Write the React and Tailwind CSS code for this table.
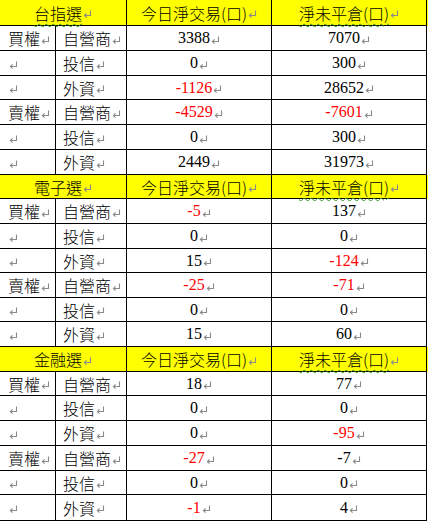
import React from "react";

const Mark = () => (
  <svg width="9" height="9" viewBox="0 0 9 9" className="inline-block ml-[1px] translate-y-[2px]" aria-hidden="true">
    <path d="M7.5 0.5 V5.5 H1.5" fill="none" stroke="#8a8a8a" strokeWidth="1.1" />
    <path d="M3.6 3.4 L1.4 5.5 L3.6 7.6" fill="none" stroke="#8a8a8a" strokeWidth="1.1" />
  </svg>
);

const sections = [
  {
    title: "台指選",
    titleUnderline: true,
    heights: [26, 25, 25, 24, 25, 25, 25],
    rows: [
      ["買權", "自營商", ["3388", 0], ["7070", 0]],
      ["", "投信", ["0", 0], ["300", 0]],
      ["", "外資", ["-1126", 1], ["28652", 0]],
      ["賣權", "自營商", ["-4529", 1], ["-7601", 1]],
      ["", "投信", ["0", 0], ["300", 0]],
      ["", "外資", ["2449", 0], ["31973", 0]],
    ],
  },
  {
    title: "電子選",
    titleUnderline: false,
    heights: [24, 25, 25, 24, 25, 24, 25],
    rows: [
      ["買權", "自營商", ["-5", 1], ["137", 0]],
      ["", "投信", ["0", 0], ["0", 0]],
      ["", "外資", ["15", 0], ["-124", 1]],
      ["賣權", "自營商", ["-25", 1], ["-71", 1]],
      ["", "投信", ["0", 0], ["0", 0]],
      ["", "外資", ["15", 0], ["60", 0]],
    ],
  },
  {
    title: "金融選",
    titleUnderline: false,
    heights: [25, 24, 25, 25, 25, 24, 26],
    rows: [
      ["買權", "自營商", ["18", 0], ["77", 0]],
      ["", "投信", ["0", 0], ["0", 0]],
      ["", "外資", ["0", 0], ["-95", 1]],
      ["賣權", "自營商", ["-27", 1], ["-7", 0]],
      ["", "投信", ["0", 0], ["0", 0]],
      ["", "外資", ["-1", 1], ["4", 0]],
    ],
  },
];

const cjk = "font-['Noto_Sans_CJK_TC','Noto_Sans_CJK_JP',sans-serif] font-light";
const num = "font-['Liberation_Serif','Noto_Sans_CJK_TC',serif]";
const wavy = "underline decoration-wavy decoration-[#3c9a2c] decoration-1 underline-offset-[3px]";

function Section({ s }) {
  return (
    <>
      <div className="flex bg-[#ffff00] text-black" style={{ height: s.heights[0] }}>
        <div className={`w-[127px] border-r border-b border-black flex items-center justify-center ${cjk} text-[16px] leading-none`}>
          <span className={s.titleUnderline ? wavy : ""}>{s.title}</span>
          <Mark />
        </div>
        <div className={`w-[145px] border-r border-b border-black flex items-center justify-center ${cjk} text-[16px] leading-none`}>
          <span>今日淨交易(口)</span>
          <Mark />
        </div>
        <div className={`w-[155px] border-r border-b border-black flex items-center justify-center ${cjk} text-[16px] leading-none`}>
          <span className={wavy}>淨未平倉(口)</span>
          <Mark />
        </div>
      </div>
      {s.rows.map((r, i) => (
        <div key={i} className="flex bg-white text-black" style={{ height: s.heights[i + 1] }}>
          <div className={`w-[56px] border-r border-b border-black flex items-center pl-[8px] ${cjk} text-[16px] leading-none`}>
            {r[0] && <span>{r[0]}</span>}
            <Mark />
          </div>
          <div className={`w-[71px] border-r border-b border-black flex items-center pl-[7px] ${cjk} text-[16px] leading-none`}>
            <span>{r[1]}</span>
            <Mark />
          </div>
          {[r[2], r[3]].map((c, j) => (
            <div
              key={j}
              className={`${j === 0 ? "w-[145px]" : "w-[155px]"} border-r border-b border-black flex items-center justify-center ${num} text-[16px] leading-none`}
            >
              <span className={c[1] ? "text-[#ff0000]" : "text-black"}>{c[0]}</span>
              <Mark />
            </div>
          ))}
        </div>
      ))}
    </>
  );
}

export default function App() {
  return (
    <div className="w-[428px] h-[521px] bg-white overflow-hidden">
      {sections.map((s, i) => (
        <Section key={i} s={s} />
      ))}
    </div>
  );
}
